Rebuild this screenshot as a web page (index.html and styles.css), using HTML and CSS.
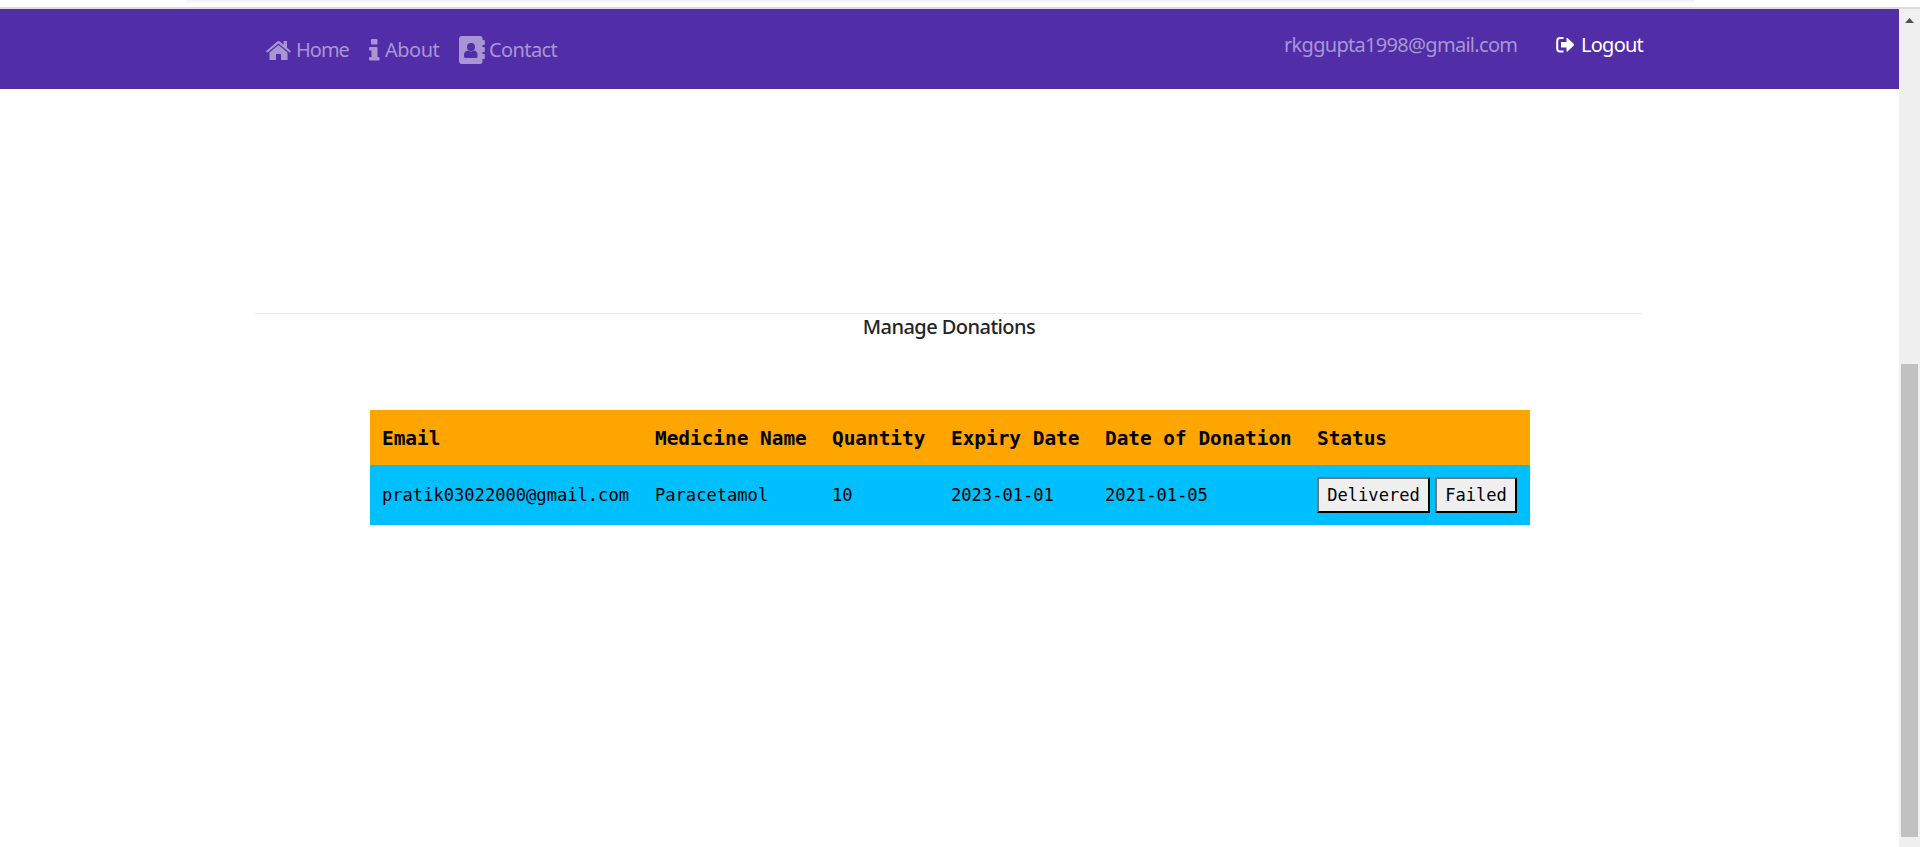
FILE: index.html
```html
<!DOCTYPE html>
<html lang="en">
<head>
<meta charset="utf-8">
<title>Manage Donations</title>
<link rel="stylesheet" href="styles.css">
</head>
<body>
<div class="toolbar"><div class="toolbar-field"></div></div>
<div class="viewport">
  <div class="page">
    <header class="navbar">
      <nav class="nav-left">
        <a class="nav-link home"><svg width="25" height="20" viewBox="0 0 25 20"><path d="M0 11.3 11 1.7q1.5-1.200 3 0L17.600 4.800V1H21v6.800l4 3.500-1.200 1.500L12.500 3.500 1.200 12.800zM3.500 12.600l9-7.500 9 7.500V20H15v-6h-5v6H3.500z"/></svg><span>Home</span></a>
        <a class="nav-link about"><svg width="11" height="22" viewBox="0 0 11 22"><path d="M3 0h4.500q1 0 1 1v3.500q0 1-1 1H3q-1 0-1-1V1q0-1 1-1zM1 8h6.500q1 0 1 1v9H9.500q1 0 1 1v1.500q0 1-1 1H1q-1 0-1-1V19q0-1 1-1h1.500v-6.500H1q-1 0-1-1V9q0-1 1-1z"/></svg><span>About</span></a>
        <a class="nav-link contact"><svg width="26" height="28" viewBox="0 0 26 28"><path fill-rule="evenodd" d="M3 0h18q2.500 0 2.500 2.500V4H25q.8 0 .8.8v3.400q0 .8-.8.8h-1.500v2H25q.8 0 .8.8v3.400q0 .8-.8.8h-1.500v2H25q.8 0 .8.8v3.400q0 .8-.8.8h-1.500v2.300Q23.500 28 21 28H3q-3 0-3-3V3q0-3 3-3zm9 7a4 4 0 1 0 0 8 4 4 0 0 0 0-8zM9 14.500q-4 .5-4 4.500v1.500q0 1.500 1.500 1.500h10.500q1.500 0 1.500-1.500V19q0-4-3.500-4.500-3 2-6 0z"/></svg><span>Contact</span></a>
      </nav>
      <div class="nav-right">
        <span class="user">rkggupta1998@gmail.com</span>
        <a class="logout"><svg width="19" height="16" viewBox="0 0 19 16"><path d="M7.500 1H4Q1.200 1 1.200 4v7.500q0 3 2.800 3h3.500" fill="none" stroke="currentColor" stroke-width="2"/><path d="M5.500 5H10.500V1.500q0-1.300 1-.5l6.300 6q.7.700 0 1.400l-6.300 6q-1 .8-1-.5V10.500H5.500q-.5 0-.5-.5V5.500q0-.5.5-.5z"/></svg><span>Logout</span></a>
      </div>
    </header>
    <main class="content">
      <hr class="rule">
      <h1 class="title"><span>Manage Donations</span></h1>
      <table class="donations">
        <colgroup><col class="c-email"><col class="c-medicine"><col class="c-quantity"><col class="c-expiry"><col class="c-date"><col class="c-status"></colgroup>
        <thead><tr><th>Email</th><th>Medicine Name</th><th>Quantity</th><th>Expiry Date</th><th>Date of Donation</th><th>Status</th></tr></thead>
        <tbody><tr><td>pratik03022000@gmail.com</td><td>Paracetamol</td><td>10</td><td>2023-01-01</td><td>2021-01-05</td><td><div class="actions"><button class="btn delivered">Delivered</button><button class="btn failed">Failed</button></div></td></tr></tbody>
      </table>
    </main>
  </div>
  <div class="scrollbar"><div class="arrow"></div><div class="thumb"></div></div>
</div>
</body>
</html>
```
FILE: styles.css
```css
* { box-sizing: border-box; }
body { margin: 0; height: 847px; overflow: hidden; background: #fff; font-family: "Noto Sans", "Open Sans", sans-serif; font-size: 20px; line-height: 30px; }
svg { display: block; fill: currentColor; flex: none; }
.toolbar { height: 9px; border-bottom: 2px solid #dadce0; padding: 0 225px 0 186px; }
.toolbar-field { height: 2px; background: #f1f3f4; border-radius: 0 0 8px 8px; }
.viewport { display: flex; height: 838px; }
.page { flex: 1; }
.navbar { height: 80px; background: #512da8; display: flex; justify-content: space-between; padding: 0 255px 0 266px; color: #a896d3; }
.nav-left { display: flex; height: 82px; align-items: center; }
.nav-link { display: flex; align-items: center; }
.home { gap: 5px; width: 103px; letter-spacing: -1px; }
.about { gap: 5px; width: 90px; letter-spacing: -.5px; }
.contact { gap: 4px; letter-spacing: -.6px; }
.nav-right { display: flex; height: 72px; align-items: center; }
.user { width: 272px; letter-spacing: -.7px; white-space: nowrap; }
.logout { display: flex; align-items: center; gap: 6px; width: 88px; color: #fff; letter-spacing: -.75px; }
.content { padding: 224px 256px 0 255px; }
.rule { height: 1px; margin: 0; border: 0; background: #ececec; }
.title { margin: 0 0 70px; font-size: 20px; line-height: 26px; font-weight: 500; text-align: center; color: #212529; letter-spacing: -.55px; }
.donations { width: 1160px; margin: 0 0 0 115px; table-layout: fixed; border-collapse: collapse; font-family: "DejaVu Sans Mono", monospace; font-size: 17.1px; line-height: 24px; color: #000; }
.c-email { width: 273px; }
.c-medicine { width: 177px; }
.c-quantity { width: 119px; }
.c-expiry { width: 154px; }
.c-date { width: 212px; }
.c-status { width: 225px; }
th, td { padding: 0 0 0 12px; text-align: left; white-space: nowrap; vertical-align: middle; }
th { height: 55px; padding-top: 2px; background: #ffa500; font-size: 19.4px; }
td { height: 60px; background: #00bfff; }
.actions { display: flex; gap: 5px; }
.btn { height: 36px; padding: 0; font: inherit; color: #000; background: #efefef; border: 2px outset #767676; border-color: #767676 #212121 #212121 #767676; }
.delivered { width: 113px; }
.failed { width: 82px; }
.scrollbar { width: 21px; background: #f0f0f0; padding: 9px 2px 0; }
.arrow { width: 9px; height: 5px; margin: 0 auto 341px; background: #505050; clip-path: polygon(50% 0, 100% 100%, 0 100%); }
.thumb { height: 473px; background: #c1c1c1; }
```
